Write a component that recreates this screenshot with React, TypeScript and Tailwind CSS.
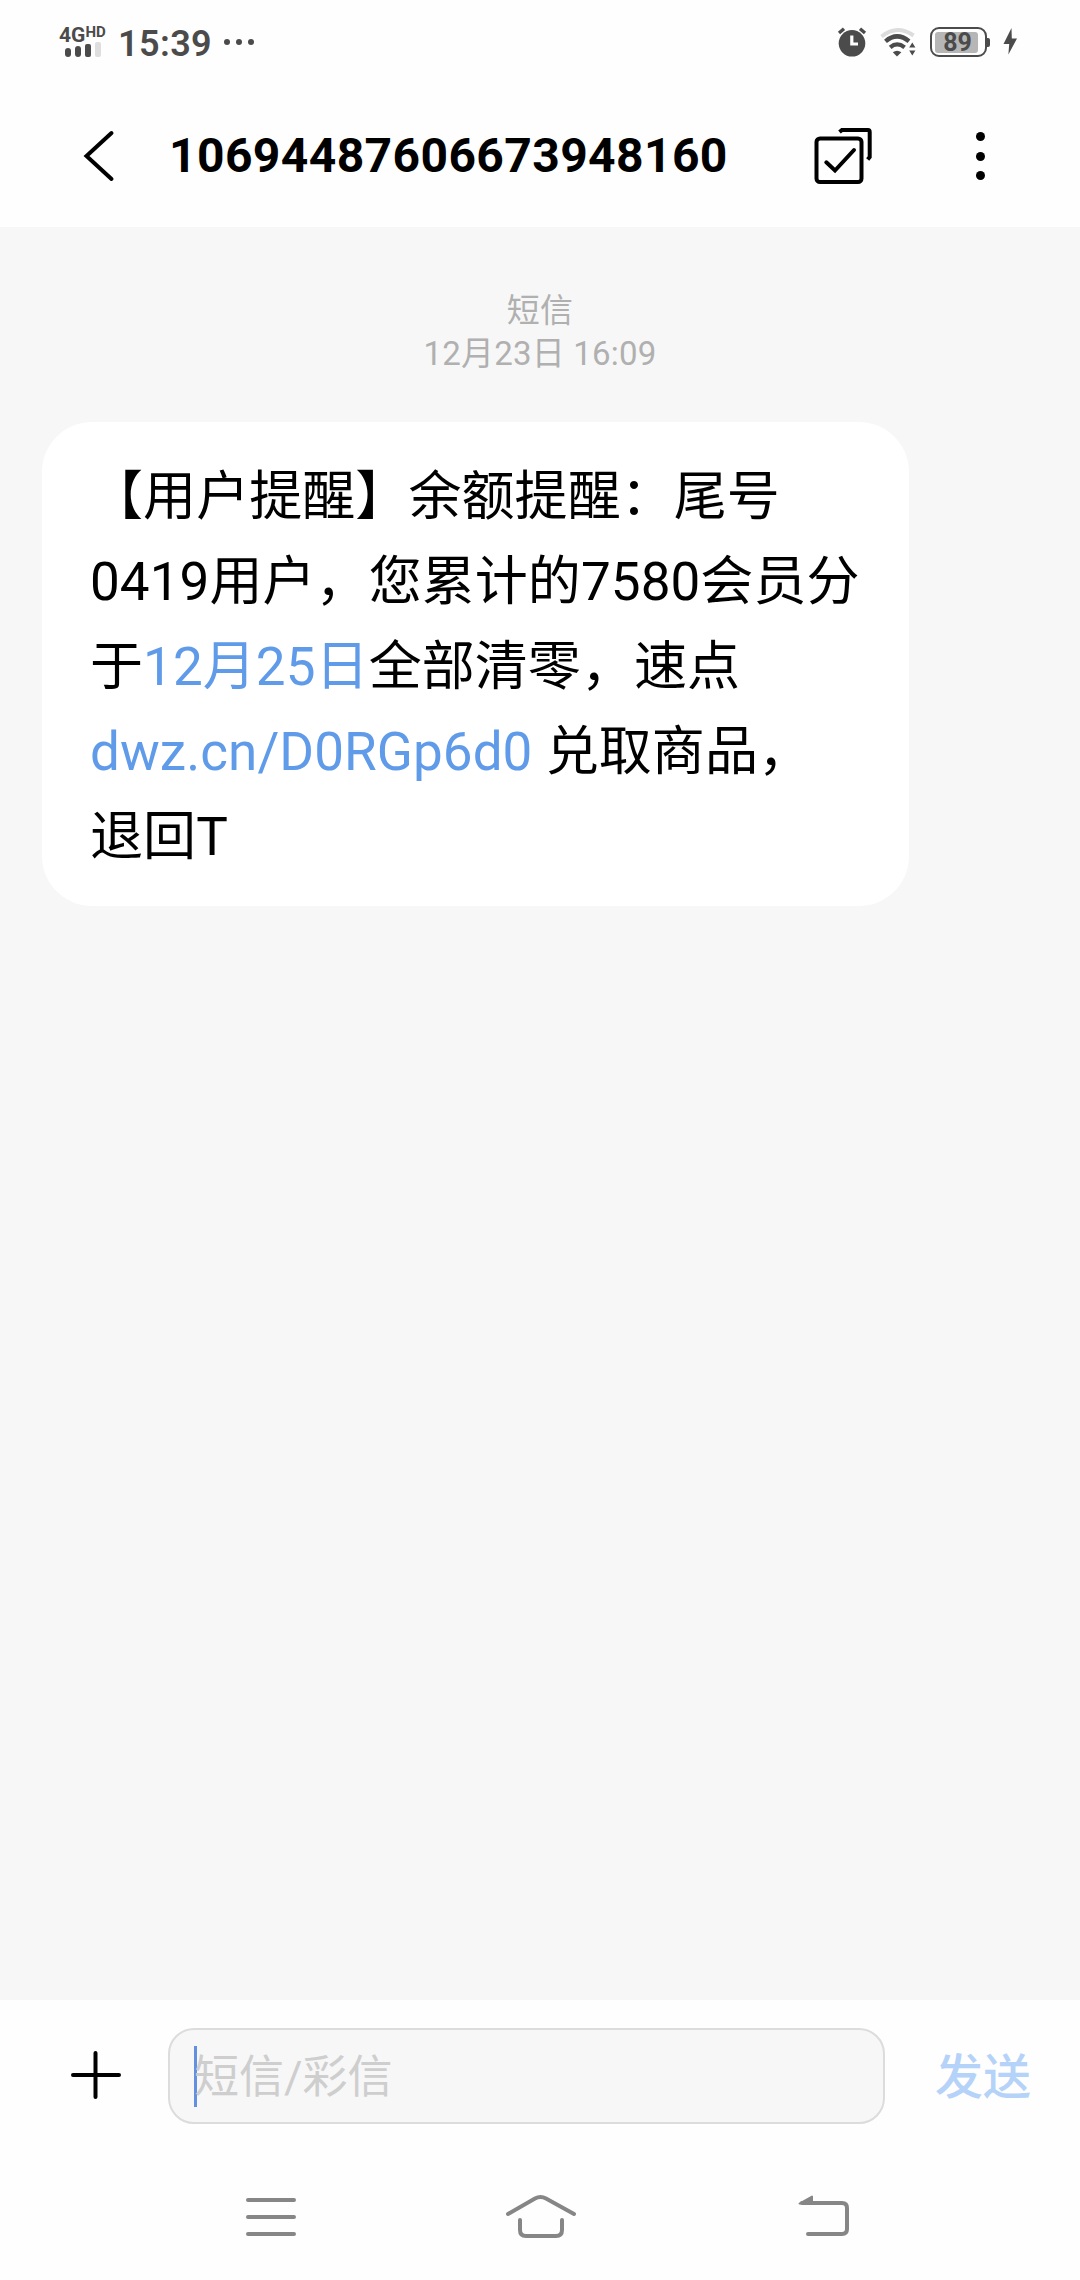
import React from 'react'

const StatusBar = () => {
  return (
    <div className="h-[84px] flex items-start justify-between pl-[59px] pr-[61px] pt-[26px] text-[#4b4b4b]">
      {/* Signal and Time */}
      <div className="flex items-start">
        <div className="w-[49px] h-[34px]">
          <div className="flex items-start font-bold leading-none h-[16px]">
            <span className="text-[21px] leading-[18px]">4G</span>
            <span className="text-[15px] leading-[13px]">HD</span>
          </div>
          <div className="flex items-end gap-[4px] pl-[6px] h-[15px]">
            <span className="w-[6px] h-[9px] rounded-[3px] bg-[#4b4b4b]"></span>
            <span className="w-[6px] h-[11px] rounded-[3px] bg-[#4b4b4b]"></span>
            <span className="w-[6px] h-[13px] rounded-[2px] bg-[#4b4b4b]"></span>
            <span className="w-[6px] h-[15px] rounded-[2px] bg-[#dedede]"></span>
          </div>
        </div>
        <p className="ml-[10px] w-[94px] text-[36px] font-semibold leading-[36px] whitespace-nowrap tracking-[0.4px]">15:39</p>
        <div className="flex gap-[6px] ml-[12px] mt-[13px]">
          <span className="size-[6px] rounded-full bg-[#4b4b4b]"></span>
          <span className="size-[6px] rounded-full bg-[#4b4b4b]"></span>
          <span className="size-[6px] rounded-full bg-[#4b4b4b]"></span>
        </div>
      </div>
      {/* Alarm, Wifi, Battery */}
      <div className="flex items-start">
        <svg width="30" height="32" viewBox="0 0 30 32" fill="none">
          <circle cx="15" cy="17.3" r="13.3" fill="#4b4b4b" />
          <path d="M2 7 7 2.8M28 7 23 2.8" stroke="#4b4b4b" strokeWidth="3.4" />
          <path d="M14.8 9.5V18H21" stroke="#fefefe" strokeWidth="3.2" />
        </svg>
        <svg className="ml-[12px]" width="40" height="32" viewBox="0 0 40 32" fill="none">
          <path d="M2.5 10.5Q18 -2 34.5 9.5" stroke="#dcdcdc" strokeWidth="4" />
          <path d="M6.5 15.3Q18 5.5 30 15.3" stroke="#4b4b4b" strokeWidth="4.4" />
          <path d="M11.2 21.3Q18 15.5 25.6 21.3" stroke="#4b4b4b" strokeWidth="4.2" />
          <path d="M13.8 26.2Q18 23.2 22.4 26.2L18 30.6Z" fill="#4b4b4b" />
          <path d="M30.2 21.4 33.3 16.6 36.4 21.4ZM30.2 24.6 33.3 29.4 36.4 24.6Z" fill="#4b4b4b" />
        </svg>
        <div className="flex items-center ml-[11px] mt-px">
          <div className="w-[57px] h-[30px] border-[2.5px] border-[#4b4b4b] rounded-[9px] p-[2.5px]">
            <div className="w-[43px] h-full bg-[#b6b6b6] rounded-[3px] flex items-center justify-center">
              <span className="text-[25px] font-bold leading-none pl-[3px]">89</span>
            </div>
          </div>
          <span className="w-[3px] h-[9px] rounded-r-[2px] bg-[#4b4b4b]"></span>
        </div>
        <svg className="ml-[13px]" width="16" height="32" viewBox="0 0 16 32">
          <path d="M8.5 2 0.5 18H6.2L5.4 28.5 14 12.5H8.8Z" fill="#4b4b4b" />
        </svg>
      </div>
    </div>
  )
}

const Header = () => {
  return (
    <div className="h-[143px] flex items-start pl-[80px] pt-[42px]">
      <svg className="mt-[2px]" width="40" height="56" viewBox="0 0 40 56" fill="none" stroke="#000" strokeWidth="4" strokeLinecap="round">
        <path d="M31.5 5 6.5 28 31.5 51" />
      </svg>
      <h1 className="w-[640px] ml-[49px] mt-[2px] text-[48px] leading-[56px] font-bold tracking-[0.4px] text-black">
        10694487606673948160
      </h1>
      <svg width="66" height="62" viewBox="809 126 66 62" fill="none" stroke="#000" strokeWidth="4">
        <rect x="816.5" y="138.5" width="45" height="43.5" rx="3.5" />
        <path d="M839.5 132 842 129.9H868Q869.7 129.9 869.7 132V157L867.7 159.5" />
        <path d="M826.3 162.3 835 170.5 854 150" strokeLinecap="round" />
      </svg>
      <div className="flex flex-col gap-[10.5px] ml-[101px] mt-[6px]">
        <span className="size-[9px] rounded-full bg-black"></span>
        <span className="size-[9px] rounded-full bg-black"></span>
        <span className="size-[9px] rounded-full bg-black"></span>
      </div>
    </div>
  )
}

const Messages = () => {
  return (
    <div className="h-[1773px] bg-[#f7f7f7] pl-[42px] pt-[62px]">
      <div className="w-[996px] text-center text-[33px] leading-[43px] tracking-[0.2px] text-[#b0b0b0]">
        <p>短信</p>
        <p>12月23日 16:09</p>
      </div>
      {/* Message Bubble */}
      <div className="w-[867px] h-[484px] mt-[47px] pl-[48px] pt-[33px] rounded-[50px] bg-white text-[53px] leading-[85px] tracking-[0.07px] text-black whitespace-nowrap">
        <p>【用户提醒】余额提醒：尾号</p>
        <p>0419用户，您累计的7580会员分</p>
        <p>于<span className="text-[#5f9be9]">12月25日</span>全部清零，速点</p>
        <p><span className="text-[#5f9be9]">dwz.cn/D0RGp6d0</span> 兑取商品，</p>
        <p>退回T</p>
      </div>
    </div>
  )
}

const Composer = () => {
  return (
    <div className="h-[152px] flex items-start pl-[69px] pt-[28px]">
      <svg className="mt-[21px]" width="52" height="52" viewBox="0 0 52 52" stroke="#000" strokeWidth="4" strokeLinecap="round">
        <path d="M4 26H50M26.5 4V48" />
      </svg>
      <div className="w-[717px] h-[96px] ml-[47px] pl-[24px] flex items-center rounded-[26px] border-2 border-[#dcdcdc] bg-[#f7f7f7]">
        <span className="w-[3px] h-[61px] bg-[#6390e0]"></span>
        <p className="-ml-[3px] mt-[3px] text-[45px] leading-[60px] text-[#cecece]">短信/彩信</p>
      </div>
      <button className="ml-[50px] mt-[20px] text-[48px] leading-[60px] font-medium text-[#b5d2f8]">发送</button>
    </div>
  )
}

const NavBar = () => {
  return (
    <div className="h-[128px] flex items-start pl-[244px] pt-[38px]">
      <svg width="54" height="52" viewBox="244 2190 54 52" fill="none" stroke="#868686" strokeWidth="4" strokeLinecap="round">
        <path d="M248 2200H294M248 2217H294M248 2234H294" />
      </svg>
      <svg className="ml-[206px]" width="74" height="52" viewBox="504 2190 74 52" fill="none" stroke="#868686" strokeWidth="4" strokeLinecap="round">
        <path d="M508 2214 535 2198.5Q540.5 2195.5 546 2198.5L574 2214" />
        <path d="M520 2220V2230Q520 2236 526 2236H556Q562 2236 562 2230V2220" />
      </svg>
      <svg className="ml-[216px]" width="60" height="52" viewBox="794 2190 60 52" fill="none" stroke="#868686" strokeWidth="4" strokeLinecap="round">
        <path d="M802 2203H842Q847 2203 847 2208V2229Q847 2234 842 2234H808" />
        <path d="M799.5 2203.5 812 2196.5V2203Z" fill="#868686" strokeWidth="2" strokeLinejoin="round" />
      </svg>
    </div>
  )
}

const App = () => {
  return (
    <div className="w-[1080px] h-[2280px] overflow-hidden bg-[#fefefe] font-[Roboto,'Noto_Sans_CJK_SC',sans-serif]">
      <StatusBar />
      <Header />
      <Messages />
      <Composer />
      <NavBar />
    </div>
  )
}

export default App
